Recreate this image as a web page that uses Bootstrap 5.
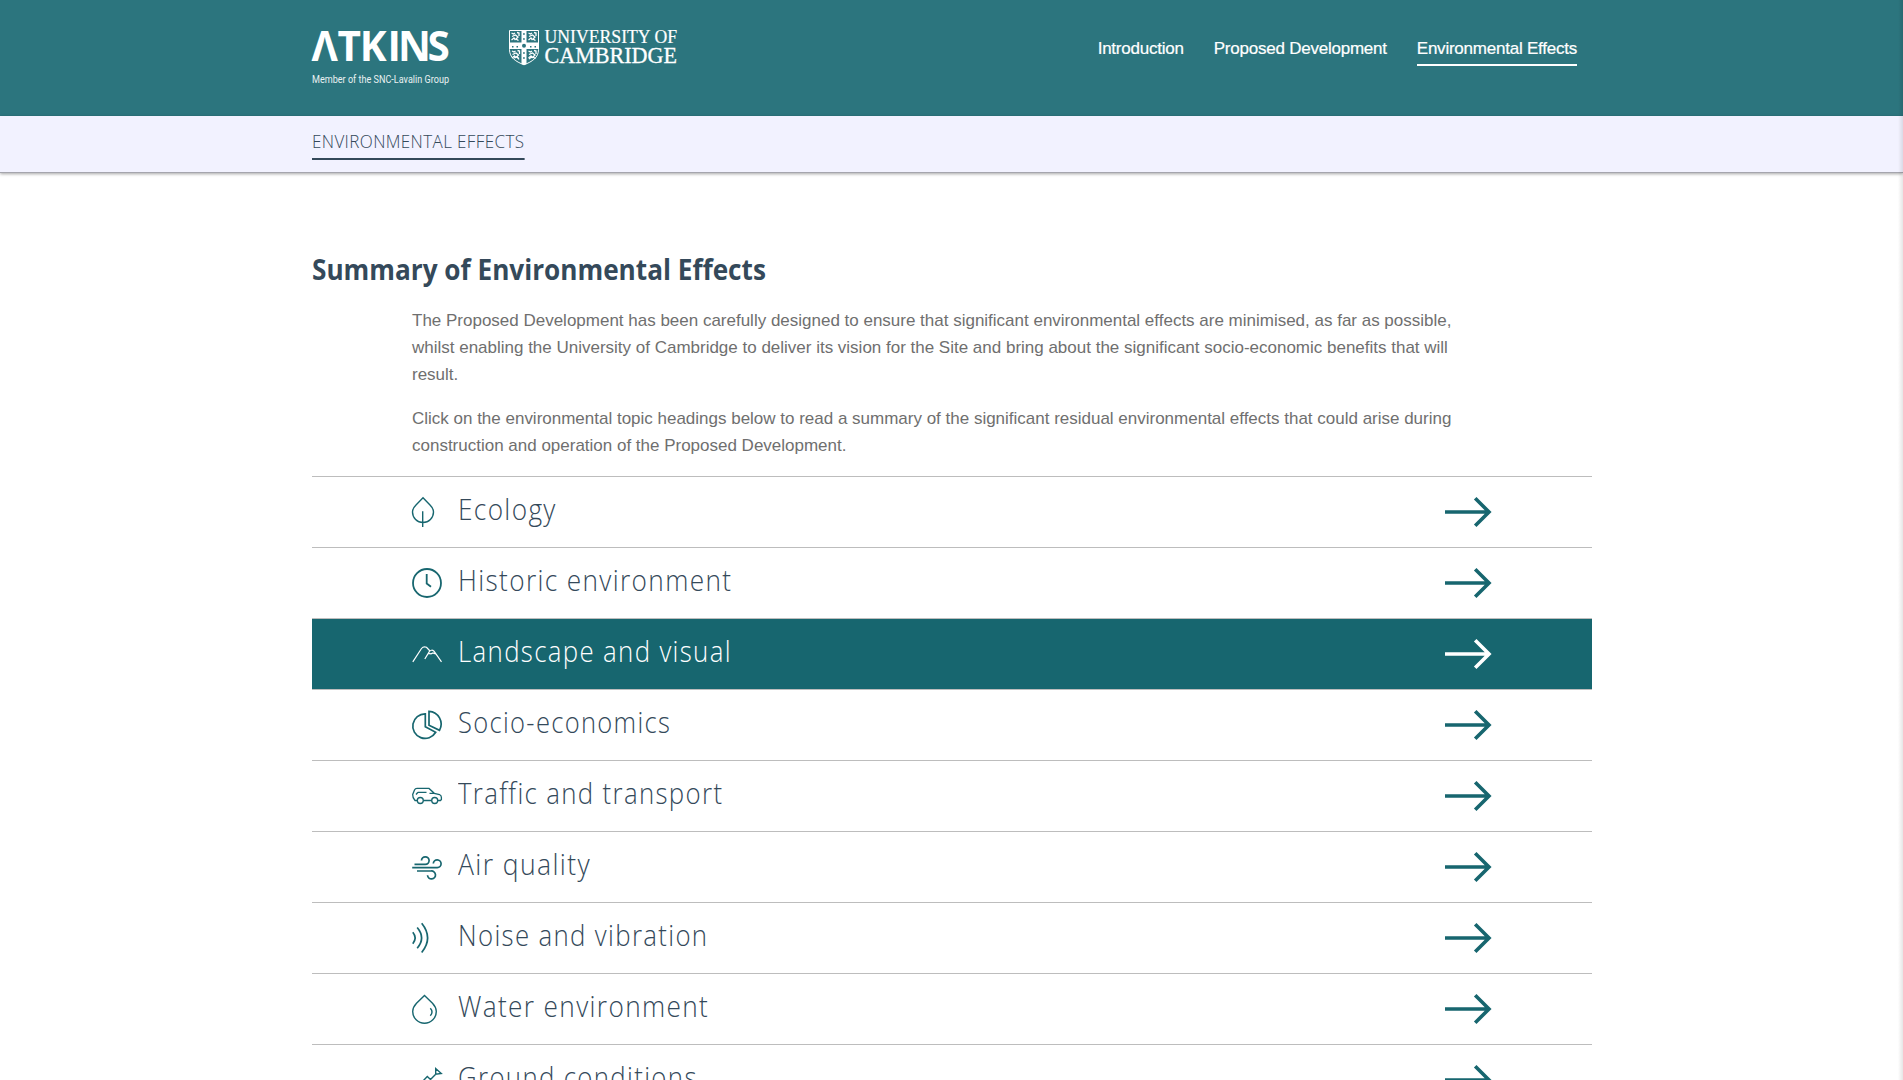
<!DOCTYPE html>
<html lang="en">
<head>
<meta charset="utf-8">
<meta name="viewport" content="width=device-width, initial-scale=1">
<title>Environmental Effects</title>
<link href="https://cdn.jsdelivr.net/npm/bootstrap@5.3.0/dist/css/bootstrap.min.css" rel="stylesheet">
<style>
  body { font-family: "Liberation Sans", Arial, sans-serif; color: #6f6f6f; background: #fff; height: 1080px; overflow: hidden; }
  .page-wrap { width: 1280px; margin: 0 auto; position: relative; left: .5px; }
  .site-head { height: 116px; background: #2c757e; }
  .logo-svg { display: block; margin-top: 20px; overflow: visible; }
  .main-nav { padding: 36px 15px 0 0; gap: 30px; }
  .main-nav .nav-link { padding: 0; height: 30px; line-height: 25px; font-size: 17px; letter-spacing: -.23px; color: #fff; -webkit-text-stroke: .2px #fff; border-bottom: 2px solid transparent; white-space: nowrap; }
  .main-nav .nav-link.active { border-color: #fff; }
  .sub-bar { height: 57px; background: #f2f2ff; border-bottom: 1px solid #a5a5ad; box-shadow: 0 1px 3px rgba(0,0,0,.35); }
  .sub-link { font-family: "Open Sans", sans-serif; font-weight: 300; font-size: 18px; line-height: 26px; height: 32px; margin-top: 12px; color: #34495a; border-bottom: 2px solid #34495a; display: inline-block; text-decoration: none; white-space: nowrap; letter-spacing: .4px; transform: scaleX(.945); transform-origin: 0 0; }
  .page-title { font-family: "Open Sans", sans-serif; font-weight: 700; font-size: 28.5px; line-height: 40px; color: #34495a; margin: 76px 0 18px; white-space: nowrap; transform: scaleX(.918); transform-origin: 0 0; }
  .intro { padding: 0 100px; font-size: 17px; line-height: 27px; }
  .intro p { margin: 0 0 17px; white-space: nowrap; letter-spacing: -.005px; }
  .topic { height: 71px; border: 0; border-top: 1px solid #bdbdbd; padding: 0 100px; color: #34495a; text-decoration: none; }
  .topic .ico { width: 30px; height: 30px; margin-right: 15px; fill: none; stroke: #17666f; stroke-width: 1.4; flex: none; overflow: visible; }
  .topic .arr { width: 47px; height: 30px; margin-left: auto; fill: none; stroke: #17666f; stroke-width: 3.6; overflow: visible; }
  .topic .lbl { font-family: "Open Sans", sans-serif; font-weight: 300; font-size: 29px; line-height: 40px; letter-spacing: 1.5px; white-space: nowrap; margin: -6px 0 0 .5px; transform: scaleX(.904); transform-origin: 0 0; }
  .topic:nth-child(3) .lbl, .topic:nth-child(5) .lbl, .topic:nth-child(7) .lbl, .topic:nth-child(9) .lbl { transform: scaleX(.89); }
  .topic:nth-child(4) .lbl { transform: scaleX(.88); }
  .topic:nth-child(6) .lbl { transform: scaleX(.916); }
  .topic.on { background: #17666f; color: #fff; }
  .topic.on .ico, .topic.on .arr { stroke: #fff; }
  .edge { position: absolute; top: 0; right: 0; width: 5px; height: 1080px; background: linear-gradient(to right, rgba(0,0,0,0), rgba(0,0,0,.1)); }
</style>
</head>
<body>
<header class="site-head">
  <div class="page-wrap d-flex justify-content-between align-items-start">
    <svg class="logo-svg" width="380" height="70" viewBox="312 20 380 70" fill="#fff">
      <text y="60.5" font-family="Open Sans, sans-serif" font-weight="700" font-size="40.500" x="311.500 337.500 359.800 387.500 398 427.500">ΛTKINS</text>
      <text x="312" y="83" font-family="Roboto, sans-serif" font-weight="400" font-size="10.5" textLength="137" lengthAdjust="spacingAndGlyphs" opacity=".9">Member of the SNC-Lavalin Group</text>
      <text x="544.5" y="42.7" font-family="Liberation Serif, serif" font-size="18.7" textLength="132.5" lengthAdjust="spacingAndGlyphs" stroke="#fff" stroke-width=".2">UNIVERSITY OF</text>
      <text x="544.5" y="63" font-family="Liberation Serif, serif" font-size="23.3" textLength="132.5" lengthAdjust="spacingAndGlyphs" stroke="#fff" stroke-width=".3">CAMBRIDGE</text>
      <path d="M509.5 30.5h29v19c0 8-6 12-14.500 15.300c-8.500-3.300-14.500-7.300-14.500-15.300z" fill="#2c757e" stroke="#fff"/>
      <path d="M521.500 30.500h5v12h12v6.500h-12v15l-2.500 1l-2.500-1v-15h-12v-6.500h12z"/>
      <g fill="none" stroke="#fff" stroke-width="1.300">
        <path id="lion" d="M511.500 33l2 1l1.500-1M512 36.500l3.500-1.500l2.500 2l-2 2l2.500 1.500M511.500 40l2.500-2l1.500 2M517 32.500l2 .5v3"/>
        <use href="#lion" x="17"/><use href="#lion" x="0.500" y="18"/><use href="#lion" x="17" y="18"/>
        <path d="M514 58l3-1.500l2 3M529 59l2.500-2l2 .5"/>
      </g>
      <g fill="#2c757e"><circle cx="524" cy="45.700" r="2"/><path d="M512 46h1.500v1.500H512zM516.500 46h1.500v1.500h-1.500zM530 46h1.500v1.500H530zM534.500 46h1.500v1.500h-1.500zM523.300 33h1.300v2h-1.300zM523.300 38h1.300v2h-1.300zM523.300 52h1.300v2h-1.300zM523.300 57h1.300v2h-1.300z"/></g>
    </svg>
    <nav class="nav main-nav">
      <a class="nav-link" href="#">Introduction</a>
      <a class="nav-link" href="#">Proposed Development</a>
      <a class="nav-link active" href="#">Environmental Effects</a>
    </nav>
  </div>
</header>
<div class="sub-bar"><div class="page-wrap"><a class="sub-link" href="#">ENVIRONMENTAL EFFECTS</a></div></div>
<main class="page-wrap">
  <h1 class="page-title">Summary of Environmental Effects</h1>
  <div class="intro">
    <p>The Proposed Development has been carefully designed to ensure that significant environmental effects are minimised, as far as possible,<br>whilst enabling the University of Cambridge to deliver its vision for the Site and bring about the significant socio-economic benefits that will<br>result.</p>
    <p>Click on the environmental topic headings below to read a summary of the significant residual environmental effects that could arise during<br>construction and operation of the Proposed Development.</p>
  </div>
  <div class="topics">
    <a class="topic d-flex align-items-center" href="#"><svg class="ico" viewBox="0 0 30 30"><path d="M11 .8L18 8C20.500 10.500 21.500 12.500 21.500 15A10.500 10.500 0 0 1 .5 15C.5 12.500 1.500 10.500 4 8ZM10.700 14.300V30"/></svg><span class="lbl">Ecology</span><svg class="arr" viewBox="0 0 47 30"><path d="M0 15H43.500M30.200 1.300L44 15L30.200 28.700"/></svg></a>
    <a class="topic d-flex align-items-center" href="#"><svg class="ico" viewBox="0 0 30 30"><g stroke-width="1.800"><circle cx="15" cy="15" r="14"/><path d="M14.700 6v9.500L19 18.700"/></g></svg><span class="lbl">Historic environment</span><svg class="arr" viewBox="0 0 47 30"><path d="M0 15H43.500M30.200 1.300L44 15L30.200 28.700"/></svg></a>
    <a class="topic on d-flex align-items-center" href="#"><svg class="ico" viewBox="0 0 30 30"><path stroke-width="1.200" d="M.8 22.800L9.500 9.500Q11.500 7 14.500 8.300L18 12M12.800 20L17.300 12.700Q19.500 10 22 12.200L29.500 22.800M16.500 14.300L19 14.800L21 14L24.300 15.300"/></svg><span class="lbl">Landscape and visual</span><svg class="arr" viewBox="0 0 47 30"><path d="M0 15H43.500M30.200 1.300L44 15L30.200 28.700"/></svg></a>
    <a class="topic d-flex align-items-center" href="#"><svg class="ico" viewBox="0 0 30 30"><path stroke-width="1.700" d="M13.300 3.800V16.800L23.700 22.300A12.300 12.300 0 1 1 13.300 3.800ZM17 1.300V15.300L27.500 20.300A12.800 12.800 0 0 0 17 1.300Z"/></svg><span class="lbl">Socio-economics</span><svg class="arr" viewBox="0 0 47 30"><path d="M0 15H43.500M30.200 1.300L44 15L30.200 28.700"/></svg></a>
    <a class="topic d-flex align-items-center" href="#"><svg class="ico" viewBox="0 0 30 30"><g stroke-width="1.300"><path d="M5.300 19.500H3Q.5 17 .7 13.500L2.500 9Q3.200 7.400 5 7.400H17L22.300 12.300L27.500 13.500Q29.500 14.500 29.400 16.500V18.500L28.500 19.500H25.700M11.300 19.500H19.700M6 11.300H14.500M4 13.500L6 11.300M17.500 12.300H22.300"/><circle cx="8.300" cy="19.500" r="3"/><circle cx="22.700" cy="19.500" r="3"/></g></svg><span class="lbl">Traffic and transport</span><svg class="arr" viewBox="0 0 47 30"><path d="M0 15H43.500M30.200 1.300L44 15L30.200 28.700"/></svg></a>
    <a class="topic d-flex align-items-center" href="#"><svg class="ico" viewBox="0 0 30 30"><path stroke-width="1.700" d="M2.500 12.400H13.300A3.800 3.800 0 1 0 9.500 8.600M.2 15.600H25.300A3.900 3.900 0 1 0 21.300 11.500M5 19H19A4 4 0 1 1 15.500 23.300"/></svg><span class="lbl">Air quality</span><svg class="arr" viewBox="0 0 47 30"><path d="M0 15H43.500M30.200 1.300L44 15L30.200 28.700"/></svg></a>
    <a class="topic d-flex align-items-center" href="#"><svg class="ico" viewBox="0 0 30 30"><path stroke-width="1.700" d="M.8 9.300Q5.500 15 .8 20.700M5.200 4.500Q14 15 5.200 25.200M9.700 .3Q21.500 15 9.700 29.500"/></svg><span class="lbl">Noise and vibration</span><svg class="arr" viewBox="0 0 47 30"><path d="M0 15H43.500M30.200 1.300L44 15L30.200 28.700"/></svg></a>
    <a class="topic d-flex align-items-center" href="#"><svg class="ico" viewBox="0 0 30 30"><path d="M12.500 1.500L20.500 9.300C23 12 24.300 14 24.300 17.500A11.800 11.800 0 0 1 .7 17.500C.7 14 2 12 4.500 9.300ZM18.300 14.300Q21.700 18 18.300 21.800"/></svg><span class="lbl">Water environment</span><svg class="arr" viewBox="0 0 47 30"><path d="M0 15H43.500M30.200 1.300L44 15L30.200 28.700"/></svg></a>
    <a class="topic d-flex align-items-center" href="#"><svg class="ico" viewBox="0 0 30 30"><path d="M23.700 3.500V9.300L29.300 8.500ZM23.700 9.300L18.500 14.500L15.300 11.500L11 16L4 28"/></svg><span class="lbl">Ground conditions</span><svg class="arr" viewBox="0 0 47 30"><path d="M0 15H43.500M30.200 1.300L44 15L30.200 28.700"/></svg></a>
  </div>
</main>
<div class="edge"></div>
<script src="https://cdn.jsdelivr.net/npm/bootstrap@5.3.0/dist/js/bootstrap.bundle.min.js"></script>
</body>
</html>
